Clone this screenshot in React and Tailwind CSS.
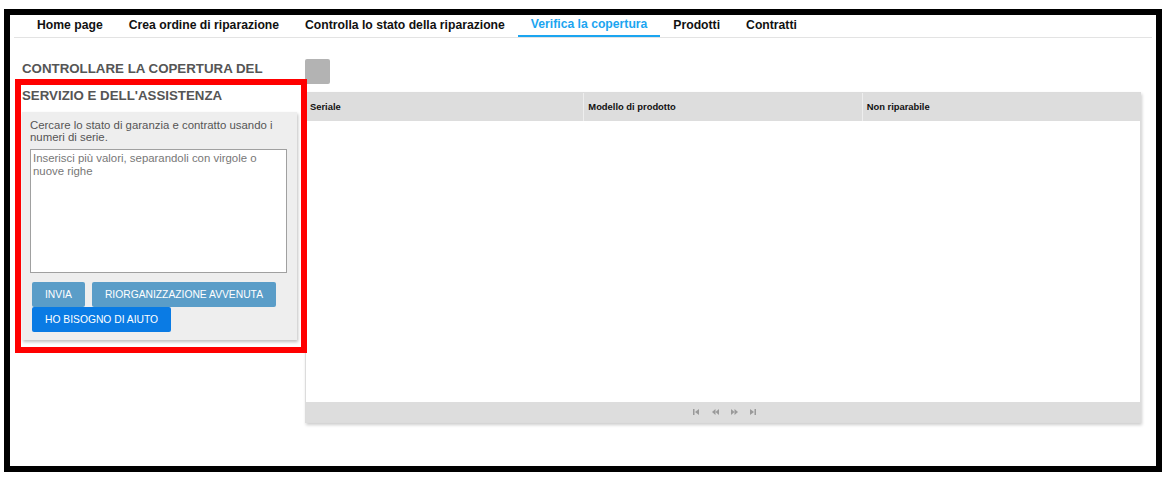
import React from "react";

const navItems = [
  "Home page",
  "Crea ordine di riparazione",
  "Controlla lo stato della riparazione",
  "Verifica la copertura",
  "Prodotti",
  "Contratti",
];

const columns = ["Seriale", "Modello di prodotto", "Non riparabile"];

const PagerIcon = ({ type }) => {
  // tiny grey pager glyphs: first / prev / next / last
  const shapes = {
    first: (
      <>
        <rect x="0" y="0" width="1.5" height="6" />
        <path d="M6 0 L2 3 L6 6 Z" />
      </>
    ),
    prev: (
      <>
        <path d="M3.5 0 L0 3 L3.5 6 Z" />
        <path d="M7 0 L3.5 3 L7 6 Z" />
      </>
    ),
    next: (
      <>
        <path d="M0 0 L3.5 3 L0 6 Z" />
        <path d="M3.5 0 L7 3 L3.5 6 Z" />
      </>
    ),
    last: (
      <>
        <path d="M0 0 L4 3 L0 6 Z" />
        <rect x="4.5" y="0" width="1.5" height="6" />
      </>
    ),
  };
  return (
    <svg width="7" height="6" viewBox="0 0 7 6" className="fill-[#9a9a9a]">
      {shapes[type]}
    </svg>
  );
};

export default function App() {
  return (
    <div
      className="w-[1171px] h-[478px] bg-white relative"
      style={{ fontFamily: '"Liberation Sans", Arial, sans-serif' }}
    >
      <div className="absolute left-[4px] top-[9px] w-[1158px] h-[463px] border-[6px] border-black bg-white">
        {/* top nav */}
        <div className="ml-[4px] mr-[4px] h-[23px] border-b border-[#e3e3e3] flex pl-[10px]">
          {navItems.map((item) => {
            const active = item === "Verifica la copertura";
            return (
              <div
                key={item}
                className={`px-[13px] h-[22px] flex items-center pb-[2px] text-[12.2px] font-bold ${
                  active ? "text-[#1ba5f0] border-b-2 border-[#1ba5f0]" : "text-[#111]"
                }`}
              >
                {item}
              </div>
            );
          })}
        </div>

        <div className="flex pl-[12px] pt-[21px] gap-[8px]">
          {/* left column */}
          <div className="w-[275px] flex flex-col">
            <h2 className="text-[13.3px] font-bold text-[#555] leading-[27px] mt-[-4px] pr-[8px]">
              CONTROLLARE LA COPERTURA DEL SERVIZIO E DELL'ASSISTENZA
            </h2>
            <div className="mt-[3px] bg-[#eeeeee] shadow-[1px_2px_3px_rgba(0,0,0,0.25)] px-[8px] pt-[7px] pb-[8px]">
              <p className="text-[11.4px] leading-[12px] text-[#555]">
                Cercare lo stato di garanzia e contratto usando i numeri di serie.
              </p>
              <textarea
                className="mt-[6px] block w-[257px] h-[124px] bg-white border border-[#a0a0a0] px-[2px] py-[2px] text-[11.4px] leading-[13px] resize-none placeholder:text-[#777]"
                placeholder="Inserisci più valori, separandoli con virgole o nuove righe"
              />
              <div className="mt-[9px] flex flex-wrap gap-x-[7px] pl-[2px]">
                <button className="h-[25px] px-[13px] bg-[#5a9dc8] text-white text-[10.3px] rounded-[2px]">
                  INVIA
                </button>
                <button className="h-[25px] px-[13px] bg-[#5a9dc8] text-white text-[10.3px] rounded-[2px]">
                  RIORGANIZZAZIONE AVVENUTA
                </button>
                <button className="h-[25px] px-[13px] bg-[#0a7be4] text-white text-[10.3px] rounded-[2px]">
                  HO BISOGNO DI AIUTO
                </button>
              </div>
            </div>
          </div>

          {/* right column */}
          <div className="w-[836px] flex flex-col">
            <div className="w-[25px] h-[25px] bg-[#b3b3b3] rounded-[2px]" />
            <div className="mt-[8px] h-[331px] border border-[#dcdcdc] shadow-[1px_2px_3px_rgba(0,0,0,0.2)] flex flex-col">
              <div className="h-[28px] bg-[#dddddd] flex">
                {columns.map((c, i) => (
                  <div
                    key={c}
                    className={`flex-1 flex items-center px-[4px] text-[9.4px] font-bold text-[#111] ${
                      i > 0 ? "border-l border-[#eeeeee]" : ""
                    }`}
                  >
                    {c}
                  </div>
                ))}
              </div>
              <div className="flex-1 bg-white" />
              <div className="h-[20px] bg-[#dddddd] flex items-center justify-center gap-[12px] pl-[3px]">
                <PagerIcon type="first" />
                <PagerIcon type="prev" />
                <PagerIcon type="next" />
                <PagerIcon type="last" />
              </div>
            </div>
          </div>
        </div>
      </div>

      {/* red highlight annotation */}
      <div className="absolute left-[15px] top-[79px] w-[292px] h-[274px] border-[6px] border-[#ff0000] pointer-events-none" />
    </div>
  );
}
